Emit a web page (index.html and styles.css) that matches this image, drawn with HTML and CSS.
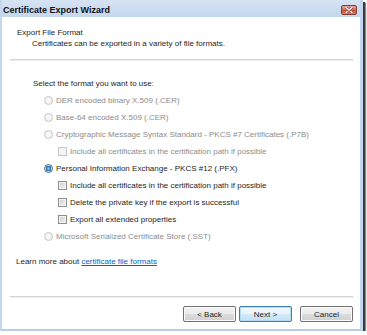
FILE: index.html
```html
<!DOCTYPE html>
<html lang="en">
<head>
    <meta charset="UTF-8">
    <title>Certificate Export Wizard</title>
    <link rel="stylesheet" href="styles.css">
</head>
<body>
    <div class="window">
        <div class="titlebar">
            <span class="title">Certificate Export Wizard</span>
            <span class="close">
                <svg width="8" height="6" viewBox="0 0 8 6">
                    <path d="M1 0.5 L7 5.5 M7 0.5 L1 5.5" stroke="#7a2a20" stroke-width="2.6" stroke-linecap="round"/>
                    <path d="M1 0.5 L7 5.5 M7 0.5 L1 5.5" stroke="#fff" stroke-width="1.5" stroke-linecap="round"/>
                </svg>
            </span>
        </div>
        <div class="content">
            <div class="header">
                <div class="header-title">Export File Format</div>
                <div class="header-sub">Certificates can be exported in a variety of file formats.</div>
            </div>
            <div class="main">
                <div class="prompt">Select the format you want to use:</div>
                <div class="options">
                    <div class="opt disabled"><span class="radio"></span>DER encoded binary X.509 (.CER)</div>
                    <div class="opt disabled"><span class="radio"></span>Base-64 encoded X.509 (.CER)</div>
                    <div class="opt disabled"><span class="radio"></span>Cryptographic Message Syntax Standard - PKCS #7 Certificates (.P7B)</div>
                    <div class="opt sub disabled"><span class="check"></span>Include all certificates in the certification path if possible</div>
                    <div class="opt"><span class="radio checked"></span>Personal Information Exchange - PKCS #12 (.PFX)</div>
                    <div class="opt sub"><span class="check"></span>Include all certificates in the certification path if possible</div>
                    <div class="opt sub"><span class="check"></span>Delete the private key if the export is successful</div>
                    <div class="opt sub"><span class="check"></span>Export all extended properties</div>
                    <div class="opt disabled"><span class="radio"></span>Microsoft Serialized Certificate Store (.SST)</div>
                </div>
                <div class="learn">Learn more about <a href="#">certificate file formats</a></div>
            </div>
            <div class="footer">
                <div class="buttons">
                    <button>&lt; Back</button>
                    <button class="default">Next &gt;</button>
                    <button class="cancel">Cancel</button>
                </div>
            </div>
        </div>
    </div>
</body>
</html>
```

FILE: styles.css
```css
body {
    margin: 0;
    background: #fff;
    font-family: "Liberation Sans", Arial, sans-serif;
    font-size: 8px;
    color: #1e1e1e;
}
.window {
    width: 358px;
    background: #c4d7ee;
    border-left: 2px solid #c4d7ee;
    border-right: 3px solid #c4d7ee;
    border-bottom: 2px solid #b9cde6;
    box-shadow: 2px 2px 0 #3c3c3c, 3px 3px 1px #888;
}
.titlebar {
    height: 17px;
    display: flex;
    justify-content: space-between;
    align-items: flex-start;
    background: linear-gradient(#d6e3f3, #c4d7ee);
}
.title {
    font-size: 9px;
    font-weight: bold;
    color: #111;
    line-height: 11px;
    margin: 5px 0 0 1px;
}
.close {
    width: 16px;
    height: 10px;
    margin: 5px 3px 0 0;
    box-sizing: border-box;
    border: 1px solid #8a3c30;
    border-radius: 2px;
    background: linear-gradient(#e8a596, #d16a58 50%, #c4503f 51%, #d77a66);
    display: flex;
    align-items: center;
    justify-content: center;
}
.content {
    background: #fff;
    height: 312px;
    display: flex;
    flex-direction: column;
}
.header {
    padding: 10px 0 10px 15px;
    line-height: 11px;
    border-bottom: 1px solid #d4d4d4;
    box-shadow: 0 1px 0 #ededed;
    margin: 0 7px 0 8px;
    padding-left: 7px;
}
.header-sub {
    padding-left: 15px;
}
.main {
    padding-top: 15px;
}
.prompt {
    line-height: 17px;
    margin-left: 31px;
}
.options {
    padding-left: 42px;
}
.opt {
    height: 17px;
    display: flex;
    align-items: center;
    gap: 3px;
}
.opt.sub {
    padding-left: 14px;
}
.opt.disabled {
    color: #8c8c8c;
}
.radio {
    width: 9px;
    height: 9px;
    box-sizing: border-box;
    border-radius: 50%;
    border: 1px solid #8e8f8f;
    background: radial-gradient(circle, #f4f4f4 40%, #d6d6d6);
}
.opt.disabled .radio {
    border-color: #c6c6c6;
    background: radial-gradient(circle, #f7f7f7 40%, #e6e6e6);
}
.radio.checked {
    border-color: #5a6670;
    background: radial-gradient(circle, #8fd0f7 0, #2a86c8 40%, #1c5f96 55%, #f2f2f2 62%, #dcdcdc);
}
.check {
    width: 9px;
    height: 9px;
    box-sizing: border-box;
    border: 1px solid #8e8f8f;
    background: linear-gradient(135deg, #cbcbcb, #f6f6f6);
    box-shadow: inset 0 0 0 1px #f4f4f4;
}
.opt.disabled .check {
    border-color: #c6c6c6;
    background: #f4f4f4;
}
.learn {
    margin-top: 8px;
    padding-left: 14px;
    line-height: 17px;
}
.learn a {
    color: #0066cc;
}
.footer {
    margin-top: auto;
    margin: auto 7px 0 8px;
    border-top: 1px solid #d4d4d4;
    box-shadow: inset 0 1px 0 #ededed;
}
.buttons {
    display: flex;
    justify-content: flex-end;
    padding: 9px 0 7px;
}
button {
    font-family: "Liberation Sans", Arial, sans-serif;
    font-size: 8px;
    color: #1e1e1e;
    width: 53px;
    height: 16px;
    padding: 0;
    margin-left: 3px;
    border: 1px solid #707070;
    border-radius: 2px;
    background: linear-gradient(#f2f2f2, #ebebeb 50%, #dddddd 51%, #cfcfcf);
    box-shadow: inset 0 0 0 1px #fcfcfc;
}
button.default {
    border-color: #3c7fb1;
    background: linear-gradient(#f4f9fd, #e6f2fb 50%, #d4eaf9 51%, #c4e0f5);
    box-shadow: inset 0 0 0 1px #b6dcf5;
}
button.cancel {
    margin-left: 8px;
}
```
